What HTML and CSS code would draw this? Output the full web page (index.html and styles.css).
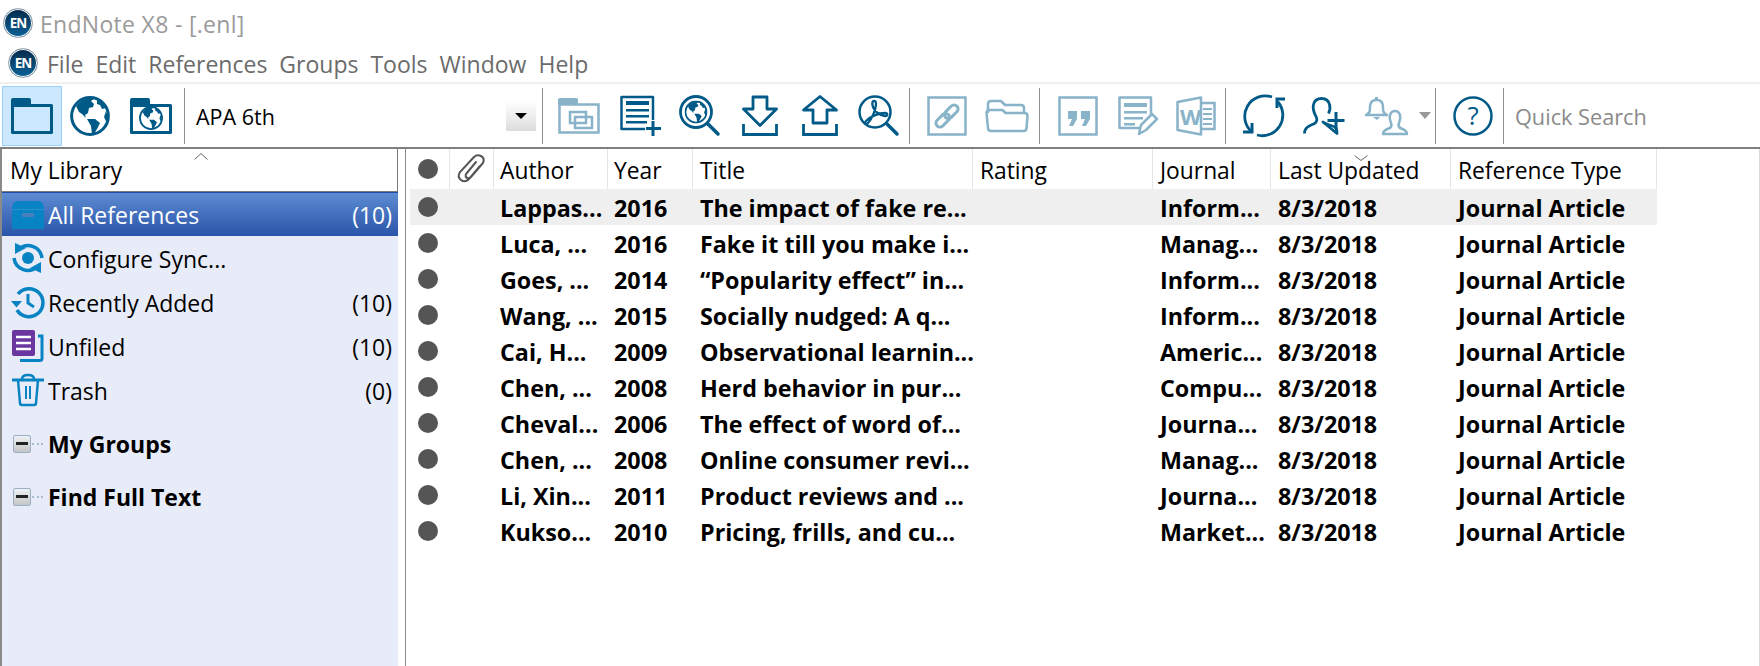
FILE: index.html
```html
<!DOCTYPE html>
<html lang="en">
<head>
<meta charset="utf-8">
<title>EndNote X8</title>
<link rel="stylesheet" href="styles.css">
</head>
<body>
<svg class="defs" width="0" height="0">
  <symbol id="globe" viewBox="0 0 40 40">
    <circle cx="20" cy="20" r="18.400" fill="#fff" stroke="#005a87" stroke-width="3"/>
    <path fill="#005a87" d="M7 9C11 4 18 1 25 2L21 5l3 3-1 3-4 1-1 5-3 2 1 3 5 1-5-1-4-4-3-2-3-6z"/>
    <path fill="#005a87" d="M17 23l8 0 5 4-3 6-3 5-2 0-1-8z"/>
    <path fill="#005a87" d="M27 3l7 5 2 4-4 1-2-4-3-1zM36 15l2 6-1 6-3-6z"/>
  </symbol>
</svg>

<header class="titlebar">
  <span class="logo">EN</span>
  <span class="title-text">EndNote X8 - [.enl]</span>
</header>

<nav class="menubar">
  <span class="logo logo-menu">EN</span>
  <span class="menu-item">File</span>
  <span class="menu-item">Edit</span>
  <span class="menu-item">References</span>
  <span class="menu-item">Groups</span>
  <span class="menu-item">Tools</span>
  <span class="menu-item">Window</span>
  <span class="menu-item">Help</span>
</nav>

<div class="toolbar">
  <div class="tb-group tb-modes">
    <div class="tb-active">
      <svg width="42" height="36" viewBox="0 0 42 36"><path fill="none" stroke="#005a87" stroke-width="3" stroke-linejoin="round" d="M1.500 7.500H40.500V34.500H1.500z"/><path fill="#005a87" d="M0 8V2q0-2 2-2h16q2 0 2 2v4z"/></svg>
    </div>
    <svg class="ml-8" width="40" height="40"><use href="#globe"/></svg>
    <svg class="ml-20" width="42" height="36" viewBox="0 0 42 36"><path fill="#fff" stroke="#005a87" stroke-width="3" stroke-linejoin="round" d="M1.500 7.500H40.500V34.500H1.500z"/><path fill="#005a87" d="M0 8V2q0-2 2-2h16q2 0 2 2v4z"/><use href="#globe" x="9" y="8" width="24" height="24"/></svg>
  </div>
  <div class="tb-style">
    <span class="style-name">APA 6th</span>
    <span class="style-drop"><i class="caret"></i></span>
  </div>
  <div class="tb-group tb-tools">
    <svg width="42" height="36" viewBox="0 0 42 36"><path fill="none" stroke="#88b3c9" stroke-width="2.500" d="M1.500 6.500H40.500V34.500H1.500z"/><path fill="#88b3c9" d="M0 7V2q0-2 2-2h16q2 0 2 2v5z"/><path fill="none" stroke="#88b3c9" stroke-width="2.500" d="M12 14h16v11H12zM17 19h17v11H17z"/></svg>
    <svg class="ml-20" width="41" height="42" viewBox="0 0 41 42"><path fill="none" stroke="#005a87" stroke-width="2.500" stroke-linejoin="round" d="M33 25V2H1.500V34H25"/><path fill="#005a87" d="M6 6h23v4H6zM6 14h23v2.500H6zM6 20h23v2.500H6zM6 26h21v2.500H6z"/><path stroke="#005a87" stroke-width="3" d="M33 26v15M26 33.500h15"/></svg>
    <svg class="ml-18" width="41" height="41" viewBox="0 0 41 41"><circle cx="17" cy="17" r="15.500" fill="none" stroke="#005a87" stroke-width="2.800"/><use href="#globe" x="5.500" y="5.500" width="23" height="23"/><path stroke="#005a87" stroke-width="3.500" stroke-linecap="round" d="M29 29l10 10"/></svg>
    <svg class="ml-22" width="36" height="41" viewBox="0 0 36 41"><path fill="none" stroke="#005a87" stroke-width="2.800" stroke-linejoin="round" d="M11 2H25V14H34.500L18 30.500 1.500 14H11z"/><path fill="none" stroke="#005a87" stroke-width="2.800" d="M1.500 29v10.500H34.500V29"/></svg>
    <svg class="ml-24" width="36" height="41" viewBox="0 0 36 41"><path fill="none" stroke="#005a87" stroke-width="2.800" stroke-linejoin="round" d="M11 28V15H1.500L18 1.500 34.500 15H25V28z"/><path fill="none" stroke="#005a87" stroke-width="2.800" d="M1.500 29v10.500H34.500V29"/></svg>
    <svg class="ml-20" width="41" height="41" viewBox="0 0 41 41"><circle cx="17" cy="17" r="15.500" fill="none" stroke="#005a87" stroke-width="2.500"/><path fill="none" stroke="#005a87" stroke-width="2.300" stroke-linejoin="round" d="M16 6C14 6 14 9 15 12C17 17 20 20 27 21C30 21 30 18 27 18C21 18 13 21 8 26C6 28 8 30 10 28C14 24 18 14 18 9C18 6 17 6 16 6Z"/><path stroke="#005a87" stroke-width="3.500" stroke-linecap="round" d="M29 29l10 10"/></svg>
  </div>
  <div class="tb-group tb-cite-a">
    <svg width="40" height="40" viewBox="0 0 40 40"><path fill="none" stroke="#88b3c9" stroke-width="2.500" d="M1.500 1.500H38.500V38.500H1.500z"/><g fill="none" stroke="#88b3c9" stroke-width="3" transform="rotate(-45 20 20)"><rect x="6" y="16" width="16" height="8" rx="4"/><rect x="18" y="16" width="16" height="8" rx="4"/></g></svg>
    <svg class="ml-18" width="44" height="34" viewBox="0 0 44 34"><path fill="none" stroke="#88b3c9" stroke-width="2.500" stroke-linejoin="round" d="M3 14V5q0-3 3-3h10l4 4h16q3 0 3 3v5"/><path fill="none" stroke="#88b3c9" stroke-width="2.500" stroke-linejoin="round" d="M1.500 14q0-3 3-3h13l3 3h19q3 0 3 3l-1 12q0 3-3 3H6q-3 0-3-3z"/></svg>
  </div>
  <div class="tb-group tb-cite-b">
    <svg width="40" height="40" viewBox="0 0 40 40"><path fill="none" stroke="#88b3c9" stroke-width="2.500" d="M1.500 1.500H38.500V38.500H1.500z"/><path fill="#88b3c9" d="M10 15h9v8l-4 7h-4l3-7h-4zM23 15h9v8l-4 7h-4l3-7h-4z"/></svg>
    <svg class="ml-20" width="40" height="40" viewBox="0 0 40 40"><path fill="none" stroke="#88b3c9" stroke-width="2.500" stroke-linejoin="round" d="M25 32H1.500V1.500H33V18"/><path fill="#88b3c9" d="M6 7h23v4H6zM6 15h23v2.500H6zM6 21h19v2.500H6zM6 27h11v2.500H6z"/><path fill="#fff" stroke="#88b3c9" stroke-width="2.500" stroke-linejoin="round" d="M21 38l2-9 11-11 5 5-11 11z"/></svg>
    <svg class="ml-18" width="40" height="40" viewBox="0 0 40 40"><path fill="none" stroke="#88b3c9" stroke-width="2.500" d="M25 7H38.500V33H25"/><path fill="#fff" stroke="#88b3c9" stroke-width="2.500" stroke-linejoin="round" d="M1.500 6L25 1.500V38.500L1.500 34z"/><path fill="#88b3c9" d="M27 12h9v2h-9zM27 17h9v2h-9zM27 22h9v2h-9zM27 27h9v2h-9z"/><text x="4" y="29" class="word-w">W</text></svg>
  </div>
  <div class="tb-group tb-sync">
    <svg width="45" height="44" viewBox="0 0 45 44"><path fill="none" stroke="#005a87" stroke-width="2.800" d="M10 38A20.500 20.500 0 0 1 30 3M36 8A20.500 20.500 0 0 1 15 41"/><path fill="none" stroke="#005a87" stroke-width="3" d="M43 5H35V14M1 38H10V29"/></svg>
    <svg class="ml-16" width="42" height="38" viewBox="0 0 42 38"><path fill="none" stroke="#005a87" stroke-width="2.800" stroke-linejoin="round" d="M1.500 36.500c0-7 6-8 10-10 3-2 3-5 1-8-2-4-3-7-2-11 1-4 4-6 8-6s7 2 8 6c1 3 0 7-1 9M20 25c3 3 10 3 13 6 1 2 1 3 1 5.500z"/><path stroke="#005a87" stroke-width="3" d="M33 15v17M24.500 23.500h17"/></svg>
    <svg class="ml-20" width="43" height="38" viewBox="0 0 43 38"><path fill="none" stroke="#88b3c9" stroke-width="2.500" stroke-linejoin="round" d="M1 18c4-2 4-4 4-8 0-5 3-7 6.500-7S18 5 18 10c0 4 0 6 4 8z"/><path fill="#88b3c9" d="M10 0h3v3h-3zM8 20h7l-3 3z"/><path fill="none" stroke="#88b3c9" stroke-width="2.500" stroke-linejoin="round" d="M18 37c0-4 4-5 7-6 2-2 2-3 1-5-1-3-2-5-1-8 1-3 3-4 5-4s4 1 5 4c1 3 0 5-1 8-1 2-1 3 1 5 3 1 7 2 7 6z"/></svg>
    <i class="tb-caret"></i>
  </div>
  <div class="tb-group tb-help">
    <svg width="40" height="40" viewBox="0 0 40 40"><circle cx="20" cy="20" r="18.500" fill="none" stroke="#005a87" stroke-width="2.500"/><text x="20" y="29" class="help-q">?</text></svg>
  </div>
  <span class="quick-search">Quick Search</span>
</div>

<main class="main">
  <aside class="sidebar">
    <div class="lib-box"><span>My Library</span><svg class="chev-up" width="14" height="7" viewBox="0 0 14 7"><path fill="none" stroke="#666" d="M0.500 6.500L7 .5l6.500 6"/></svg></div>
    <div class="group-row selected">
      <svg width="32" height="28" viewBox="0 0 32 28"><path fill="#0884c4" d="M0 6Q1 0 6 0H26Q31 0 32 6V26q0 2-2 2H2q-2 0-2-2z"/><path stroke="#2c90c8" d="M0 8.500h32"/><rect x="10" y="12" width="12" height="4" rx="1" fill="#4a7fbe"/></svg>
      <span class="g-name">All References</span><span class="g-count">(10)</span>
    </div>
    <div class="group-row">
      <svg width="32" height="32" viewBox="0 0 32 32"><circle cx="16" cy="16" r="6" fill="#0884c4"/><path fill="none" stroke="#0884c4" stroke-width="3.500" d="M30 16A14 14 0 0 0 7 7M2 16A14 14 0 0 0 25 25"/><path fill="#0884c4" d="M3 1l11 5-11 6zM29 31l-11-5 11-6z"/></svg>
      <span class="g-name">Configure Sync...</span>
    </div>
    <div class="group-row">
      <svg width="32" height="32" viewBox="0 0 32 32"><path fill="none" stroke="#0884c4" stroke-width="3.500" d="M6 8A14 14 0 1 1 5 24"/><path fill="#0884c4" d="M-1 15h11l-5.500 6.500z"/><path fill="none" stroke="#0884c4" stroke-width="3" d="M16 8v9l6 4"/></svg>
      <span class="g-name">Recently Added</span><span class="g-count">(10)</span>
    </div>
    <div class="group-row">
      <svg width="32" height="32" viewBox="0 0 32 32"><path fill="none" stroke="#0884c4" stroke-width="3" d="M8 30.500h20q2 0 2-2V6h-4"/><rect x="0" y="0" width="23" height="26" rx="2" fill="#6a37a0"/><path stroke="#fff" stroke-width="2.500" d="M4 7h15M4 13h15M4 19h15"/></svg>
      <span class="g-name">Unfiled</span><span class="g-count">(10)</span>
    </div>
    <div class="group-row">
      <svg width="32" height="32" viewBox="0 0 32 32"><path fill="none" stroke="#0884c4" stroke-width="2.500" d="M6 6l2 23q0 2 2 2h12q2 0 2-2l2-23M10 5q0-4 6-4t6 4"/><path stroke="#0884c4" stroke-width="3" d="M0 6h32"/><path stroke="#0884c4" stroke-width="2" d="M14 12v13M18 12v13"/></svg>
      <span class="g-name">Trash</span>
      <span class="g-count">(0)</span>
    </div>
    <div class="group-head head-first"><span class="tree-box"><i></i></span><span class="tree-dots"></span><strong>My Groups</strong></div>
    <div class="group-head"><span class="tree-box"><i></i></span><span class="tree-dots"></span><strong>Find Full Text</strong></div>
  </aside>

  <section class="list">
    <div class="list-head list-grid">
      <div class="cell"><span class="dot"></span></div>
      <div class="cell"><svg width="28" height="30" viewBox="0 0 28 30"><path fill="none" stroke="#555" stroke-width="2" stroke-linecap="round" d="M22 12L11 25q-4 4-8 1t-1-8L16 3q3-3 7-1t2 7L13 23q-2 2-4 1t-1-4L18 8"/></svg></div>
      <div class="cell">Author</div><div class="cell">Year</div><div class="cell">Title</div><div class="cell">Rating</div><div class="cell">Journal</div>
      <div class="cell cell-sort">Last Updated<svg class="chev-down" width="14" height="6" viewBox="0 0 14 6"><path fill="none" stroke="#666" d="M.5.5L7 5.500l6.500-5"/></svg></div>
      <div class="cell">Reference Type</div>
    </div>
    <div class="row list-grid row-sel"><div class="c"><span class="dot"></span></div><div></div><div class="c">Lappas...</div><div class="c">2016</div><div class="c">The impact of fake re...</div><div></div><div class="c">Inform...</div><div class="c">8/3/2018</div><div class="c">Journal Article</div></div>
    <div class="row list-grid"><div class="c"><span class="dot"></span></div><div></div><div class="c">Luca, ...</div><div class="c">2016</div><div class="c">Fake it till you make i...</div><div></div><div class="c">Manag...</div><div class="c">8/3/2018</div><div class="c">Journal Article</div></div>
    <div class="row list-grid"><div class="c"><span class="dot"></span></div><div></div><div class="c">Goes, ...</div><div class="c">2014</div><div class="c">“Popularity effect” in...</div><div></div><div class="c">Inform...</div><div class="c">8/3/2018</div><div class="c">Journal Article</div></div>
    <div class="row list-grid"><div class="c"><span class="dot"></span></div><div></div><div class="c">Wang, ...</div><div class="c">2015</div><div class="c">Socially nudged: A q...</div><div></div><div class="c">Inform...</div><div class="c">8/3/2018</div><div class="c">Journal Article</div></div>
    <div class="row list-grid"><div class="c"><span class="dot"></span></div><div></div><div class="c">Cai, H...</div><div class="c">2009</div><div class="c">Observational learnin...</div><div></div><div class="c">Americ...</div><div class="c">8/3/2018</div><div class="c">Journal Article</div></div>
    <div class="row list-grid"><div class="c"><span class="dot"></span></div><div></div><div class="c">Chen, ...</div><div class="c">2008</div><div class="c">Herd behavior in pur...</div><div></div><div class="c">Compu...</div><div class="c">8/3/2018</div><div class="c">Journal Article</div></div>
    <div class="row list-grid"><div class="c"><span class="dot"></span></div><div></div><div class="c">Cheval...</div><div class="c">2006</div><div class="c">The effect of word of...</div><div></div><div class="c">Journa...</div><div class="c">8/3/2018</div><div class="c">Journal Article</div></div>
    <div class="row list-grid"><div class="c"><span class="dot"></span></div><div></div><div class="c">Chen, ...</div><div class="c">2008</div><div class="c">Online consumer revi...</div><div></div><div class="c">Manag...</div><div class="c">8/3/2018</div><div class="c">Journal Article</div></div>
    <div class="row list-grid"><div class="c"><span class="dot"></span></div><div></div><div class="c">Li, Xin...</div><div class="c">2011</div><div class="c">Product reviews and ...</div><div></div><div class="c">Journa...</div><div class="c">8/3/2018</div><div class="c">Journal Article</div></div>
    <div class="row list-grid"><div class="c"><span class="dot"></span></div><div></div><div class="c">Kukso...</div><div class="c">2010</div><div class="c">Pricing, frills, and cu...</div><div></div><div class="c">Market...</div><div class="c">8/3/2018</div><div class="c">Journal Article</div></div>
  </section>
</main>
</body>
</html>
```

FILE: styles.css
```css
* { box-sizing: border-box; }
html, body { margin: 0; height: 100%; }
body {
  width: 1760px;
  height: 666px;
  overflow: hidden;
  background: #fff;
  color: #000;
  font-family: "Open Sans", "Noto Sans", "Liberation Sans", sans-serif;
  font-size: 20px;
  display: flex;
  flex-direction: column;
}
svg { display: block; flex: none; overflow: visible; }
.defs { position: absolute; }

.titlebar { height: 43px; display: flex; align-items: center; padding: 3px 0 0 3px; flex: none; }
.title-text { margin-left: 7px; padding-top: 2px; font-size: 23px; color: #9b9b9b; letter-spacing: .3px; }
.logo {
  width: 30px; height: 30px; border-radius: 50%; flex: none;
  border: 1px solid #9aa6b0; box-shadow: inset 0 0 0 1px #fff;
  background: linear-gradient(#06294a, #0c6398);
  color: #fff; font-size: 13.500px; font-weight: 700; letter-spacing: -1px;
  display: flex; align-items: center; justify-content: center;
}

.menubar { height: 41px; display: flex; align-items: center; padding: 0 0 0 8px; flex: none; border-bottom: 2px solid #efefef; }
.logo-menu { margin-right: 9px; }
.menu-item { margin-right: 12px; padding-top: 3px; font-size: 23px; color: #6b6b6b; }

.toolbar { height: 65px; display: flex; align-items: center; flex: none; padding-left: 2px; border-bottom: 2px solid #7f7f7f; }
.tb-group { height: 56px; display: flex; align-items: center; flex: none; border-right: 1px solid #8e8e8e; }
.tb-modes { width: 183px; height: 62px; border-right: 0; position: relative; }
.tb-modes::after { content: ""; position: absolute; right: 0; top: 3px; bottom: 3px; width: 1px; background: #8e8e8e; }
.tb-active { width: 60px; height: 60px; background: #cce8ff; border: 1px solid #99d1ff; display: flex; align-items: center; justify-content: center; flex: none; }
.ml-8 { margin-left: 8px; }
.ml-16 { margin-left: 16px; }
.ml-18 { margin-left: 18px; }
.ml-20 { margin-left: 20px; }
.ml-22 { margin-left: 22px; }
.ml-24 { margin-left: 24px; }

.tb-style { width: 358px; height: 56px; display: flex; align-items: center; justify-content: space-between; flex: none; padding: 0 6px 0 11px; border-right: 1px solid #8e8e8e; }
.style-name { padding-top: 1px; font-size: 21.500px; }
.style-drop { width: 30px; height: 30px; background: linear-gradient(#fff, #dcdcdc); display: flex; align-items: center; justify-content: center; }
.caret { width: 0; height: 0; border: 6px solid transparent; border-top: 6px solid #000; border-bottom: 0; }

.tb-tools { width: 367px; padding-left: 15px; }
.tb-cite-a { width: 130px; padding-left: 17px; }
.tb-cite-b { width: 186px; padding-left: 18px; }
.tb-sync { width: 210px; padding-left: 16px; }
.tb-help { width: 68px; padding-left: 17px; }
.tb-caret { margin-left: 11px; width: 0; height: 0; border: 6px solid transparent; border-top: 7px solid #999; border-bottom: 0; }
.word-w { font: 700 22px "Open Sans", sans-serif; fill: #88b3c9; }
.help-q { font: 400 26px "Open Sans", sans-serif; fill: #005a87; text-anchor: middle; }
.quick-search { margin-left: 11px; padding-top: 1px; font-size: 21.700px; color: #8a8a8a; }

.main { flex: 1; display: flex; min-height: 0; }
.sidebar { width: 400px; flex: none; background: #e8ecf8; border-left: 2px solid #8a8a8a; border-right: 2px solid #fff; }
.lib-box { position: relative; height: 43px; background: #fff; border: 1px solid #7a7a7a; border-top: 0; border-left: 0; padding-left: 8px; display: flex; align-items: center; font-size: 22.800px; }
.chev-up { position: absolute; left: 192px; top: 4px; }
.group-row { height: 44px; display: flex; align-items: center; padding: 0 6px 0 10px; font-size: 23px; }
.g-name { margin-left: 4px; padding-top: 1px; flex: 1; }
.g-count { padding-top: 1px; text-align: right; }
.selected { background: linear-gradient(#5c8bd2, #2a55a9); color: #fff; border-top: 1px solid #1f4fa8; }
.group-head { height: 53px; display: flex; align-items: center; padding-left: 11px; font-size: 23px; }
.head-first { margin-top: 5px; }
.group-head strong { margin-left: 5px; font-weight: 700; }
.tree-box { width: 18px; height: 18px; border: 1px solid #9bb0c4; background: linear-gradient(#eef2f6, #c4c6c4); border-radius: 2px; display: flex; align-items: center; justify-content: center; flex: none; }
.tree-box i { width: 12px; height: 3px; background: #222; }
.tree-dots { width: 11px; height: 0; margin-left: 1px; border-top: 2px dotted #a9bdd0; flex: none; }

.list { width: 1355px; margin-left: 5px; flex: none; border-left: 1px solid #8a8a8a; border-right: 1px solid #d8d8d8; }
.list-grid { display: grid; grid-template-columns: 44px 44px 114px 85px 280px 180px 118px 180px 206px; align-items: center; width: 1251px; }
.list-head { height: 40px; }
.cell { height: 100%; padding: 2px 0 0 6px; display: flex; align-items: center; border-right: 1px solid #e6e6e6; font-size: 22.800px; white-space: nowrap; }
.cell:nth-child(-n+2) { padding: 0 0 0 8px; }
.cell:nth-child(n+5) { padding-left: 7px; }
.cell-sort { position: relative; }
.chev-down { position: absolute; left: 83px; top: 6px; }
.row { height: 36px; font-weight: 700; font-size: 23.300px; }
.row-sel { background: linear-gradient(90deg, #fff 4px, #efefef 4px); }
.c { padding: 1px 0 0 6px; white-space: nowrap; }
.c:nth-child(n+5) { padding-left: 7px; }
.c:first-child { padding: 0 0 0 12px; }
.dot { display: block; width: 20px; height: 20px; border-radius: 50%; background: #555; }
.cell:first-child .dot { margin-left: 4px; }
```
